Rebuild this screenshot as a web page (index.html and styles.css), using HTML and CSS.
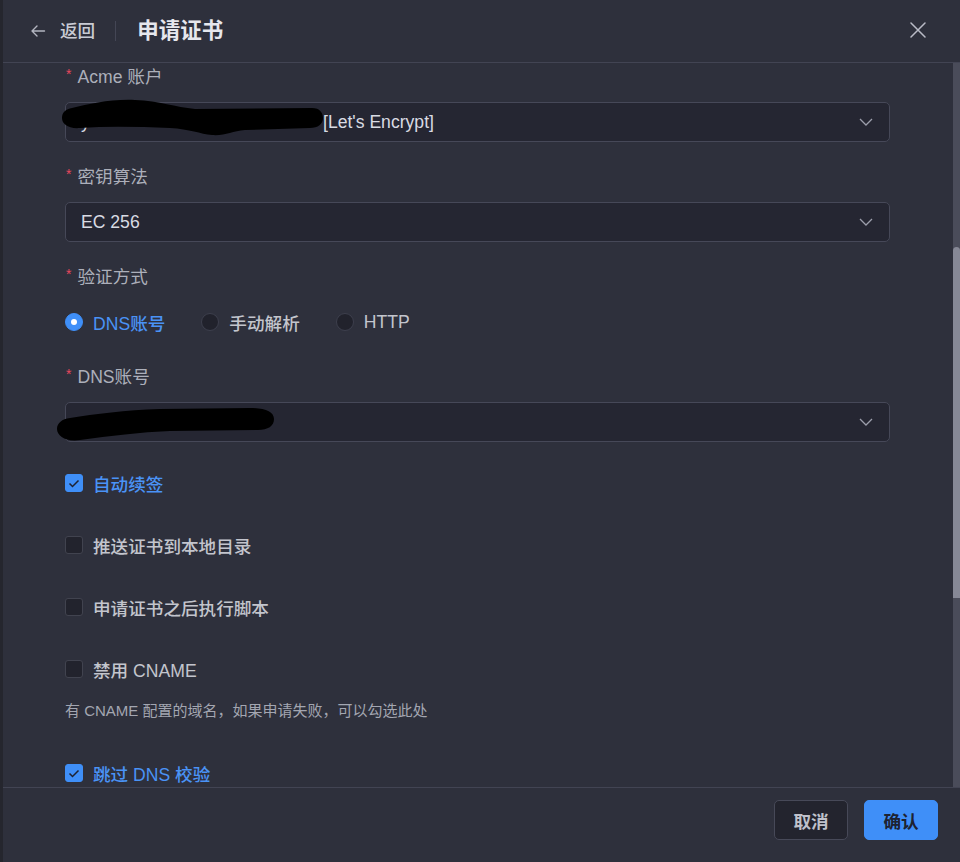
FILE: index.html
```html
<!DOCTYPE html>
<html lang="zh-CN">
<head>
<meta charset="utf-8">
<title>申请证书</title>
<link rel="stylesheet" href="styles.css">
</head>
<body>
<div class="drawer">
  <header class="header">
    <div class="back">
      <svg class="back-icon" width="16" height="16" viewBox="0 0 16 16"><path d="M14.5 8H2M7 3L2 8l5 5" fill="none" stroke="#b3b5c0" stroke-width="1.4" stroke-linecap="round" stroke-linejoin="round"/></svg>
      <span class="back-text">返回</span>
    </div>
    <span class="divider"></span>
    <h1 class="title">申请证书</h1>
    <svg class="close" width="16" height="16" viewBox="0 0 16 16"><path d="M1 1l14 14M15 1L1 15" fill="none" stroke="#b9bbc6" stroke-width="1.5" stroke-linecap="round"/></svg>
  </header>

  <div class="body">
    <div class="form">
      <div class="group">
        <div class="label"><span class="req">*</span>Acme 账户</div>
        <div class="select">
          <span class="value"><span class="hidden-part">y</span>[Let's Encrypt]</span>
          <svg class="chev" width="14" height="8" viewBox="0 0 14 8"><path d="M1 1l6 6 6-6" fill="none" stroke="#9c9eab" stroke-width="1.3"/></svg>
          <svg class="scribble s1" width="270" height="45" viewBox="0 0 270 45"><path transform="translate(-60,-96)" d="M72,108 C90,104 110,99 135,100 C160,101 175,107 195,109 L312,108 C320,108 323,113 323,118 C323,124 318,128 310,128 L245,130 C232,131 225,136 212,135 C200,134 190,129 170,128 C140,127 110,126 80,128 C68,129 62,124 62,118 C62,112 66,109 72,108 Z" fill="#000"/></svg>
        </div>
      </div>

      <div class="group">
        <div class="label"><span class="req">*</span>密钥算法</div>
        <div class="select">
          <span class="value">EC 256</span>
          <svg class="chev" width="14" height="8" viewBox="0 0 14 8"><path d="M1 1l6 6 6-6" fill="none" stroke="#9c9eab" stroke-width="1.3"/></svg>
        </div>
      </div>

      <div class="group">
        <div class="label"><span class="req">*</span>验证方式</div>
        <div class="radios">
          <label class="radio checked"><span class="dot"></span>DNS账号</label>
          <label class="radio"><span class="dot"></span>手动解析</label>
          <label class="radio"><span class="dot"></span>HTTP</label>
        </div>
      </div>

      <div class="group last">
        <div class="label"><span class="req">*</span>DNS账号</div>
        <div class="select">
          <span class="value"></span>
          <svg class="chev" width="14" height="8" viewBox="0 0 14 8"><path d="M1 1l6 6 6-6" fill="none" stroke="#9c9eab" stroke-width="1.3"/></svg>
          <svg class="scribble s2" width="225" height="50" viewBox="0 0 225 50"><path transform="translate(-55,-396)" d="M70,418 C95,414 125,410 160,409 L250,408 C265,408 274,412 274,419 C274,426 268,430 258,430 L170,431 C140,432 110,436 80,440 C66,442 57,436 57,429 C57,423 62,419 70,418 Z" fill="#000"/></svg>
        </div>
      </div>

      <div class="check-item">
        <label class="check checked"><span class="box"><svg width="12" height="9" viewBox="0 0 12 9"><path d="M1.5 4.5l3 3 6-6" fill="none" stroke="#1f2230" stroke-width="1.5"/></svg></span>自动续签</label>
      </div>
      <div class="check-item">
        <label class="check"><span class="box"></span>推送证书到本地目录</label>
      </div>
      <div class="check-item">
        <label class="check"><span class="box"></span>申请证书之后执行脚本</label>
      </div>
      <div class="check-item">
        <label class="check"><span class="box"></span>禁用 CNAME</label>
        <p class="help">有 CNAME 配置的域名，如果申请失败，可以勾选此处</p>
      </div>
      <div class="check-item">
        <label class="check checked"><span class="box"><svg width="12" height="9" viewBox="0 0 12 9"><path d="M1.5 4.5l3 3 6-6" fill="none" stroke="#1f2230" stroke-width="1.5"/></svg></span>跳过 DNS 校验</label>
      </div>
    </div>
    <div class="scrollbar"><div class="thumb"></div></div>
  </div>

  <footer class="footer">
    <button class="btn cancel">取消</button>
    <button class="btn primary">确认</button>
  </footer>
</div>
</body>
</html>
```

FILE: styles.css
```css
* { box-sizing: border-box; }
html, body { margin: 0; padding: 0; }
body {
  background: #2e303c;
  font-family: "Liberation Sans", "Noto Sans CJK SC", sans-serif;
  color: #c4c6cf;
}
.drawer {
  height: 862px;
  display: flex;
  flex-direction: column;
  border-left: 3px solid #25262e;
  overflow: hidden;
}
.header {
  height: 63px;
  flex: none;
  display: flex;
  align-items: center;
  padding: 0 34px 1px 27px;
  border-bottom: 1px solid #424453;
}
.back {
  display: flex;
  align-items: center;
  gap: 14px;
}
.back-icon { display: block; }
.back-text {
  font-size: 17.6px;
  font-weight: 500;
  color: #c9cbd4;
  line-height: 24px;
}
.divider {
  width: 1px;
  height: 20px;
  background: #444655;
  margin: 0 21px 0 20px;
}
.title {
  margin: 0;
  font-size: 21.5px;
  font-weight: 600;
  color: #e6e7ed;
  line-height: 28px;
  flex: 1;
}
.close { display: block; margin-top: -2px; }

.body {
  flex: 1;
  display: flex;
  min-height: 0;
}
.form {
  flex: 1;
  padding: 2px 63px 0 62px;
  overflow: hidden;
}
.group { margin-bottom: 23px; }
.group.last { margin-bottom: 21px; }
.label {
  font-size: 17.6px;
  line-height: 24px;
  color: #acafba;
  margin-bottom: 13px;
  display: flex;
  align-items: flex-start;
}
.req {
  color: #e8475c;
  font-size: 14px;
  line-height: 18px;
  margin: 0 6px 0 1px;
}
.select {
  position: relative;
  height: 40px;
  border: 1px solid #464858;
  border-radius: 5px;
  background: #252632;
  display: flex;
  align-items: center;
  padding: 0 16px 0 15px;
}
.value {
  flex: 1;
  font-size: 17.6px;
  color: #d9dbe3;
  white-space: nowrap;
}
.hidden-part {
  display: inline-block;
  width: 242px;
}
.chev { display: block; }
.scribble { position: absolute; }
.s1 { left: -6px; top: -7px; }
.s2 { left: -11px; top: -7px; }

.radios {
  height: 40px;
  display: flex;
  align-items: center;
  gap: 36px;
}
.radio {
  display: flex;
  align-items: center;
  gap: 10px;
  font-size: 17.6px;
  font-weight: 500;
  color: #c3c5cd;
}
.radio .dot {
  width: 18px;
  height: 18px;
  border-radius: 50%;
  background: #21222c;
  border: 1px solid #3d3f4d;
  display: flex;
  align-items: center;
  justify-content: center;
}
.radio.checked { color: #4a93f6; }
.radio.checked .dot {
  background: #3f8ff8;
  border-color: #3f8ff8;
}
.radio.checked .dot::after {
  content: "";
  width: 6px;
  height: 6px;
  border-radius: 50%;
  background: #fff;
}

.check-item { margin-bottom: 22px; }
.check {
  height: 40px;
  display: flex;
  align-items: center;
  gap: 10px;
  font-size: 17.6px;
  font-weight: 500;
  color: #c3c5cd;
}
.check .box {
  width: 18px;
  height: 18px;
  border-radius: 3px;
  background: #22232d;
  border: 1px solid #41434f;
  display: flex;
  align-items: center;
  justify-content: center;
}
.check.checked { color: #4a93f6; }
.check.checked .box {
  background: #3f8ff8;
  border-color: #3f8ff8;
}
.help {
  margin: 11px 0 31px 0;
  font-size: 15px;
  line-height: 22px;
  color: #a3a6b1;
}

.scrollbar {
  width: 7px;
  flex: none;
  background: #4a4c5a;
}
.thumb {
  margin-top: 184px;
  height: 351px;
  background: #868896;
  border-radius: 4px 4px 0 0;
}

.footer {
  height: 75px;
  flex: none;
  border-top: 1px solid #424453;
  display: flex;
  justify-content: flex-end;
  align-items: flex-start;
  gap: 16px;
  padding: 12px 22px 0 0;
}
.btn {
  width: 74px;
  height: 40px;
  border-radius: 5px;
  font-family: "Liberation Sans", "Noto Sans CJK SC", sans-serif;
  font-size: 17.6px;
  font-weight: 600;
  cursor: pointer;
}
.cancel {
  background: #23242e;
  border: 1px solid #474958;
  color: #bfc1ca;
}
.primary {
  background: #3f8ff8;
  border: 1px solid #3f8ff8;
  color: #1d2231;
}
```
